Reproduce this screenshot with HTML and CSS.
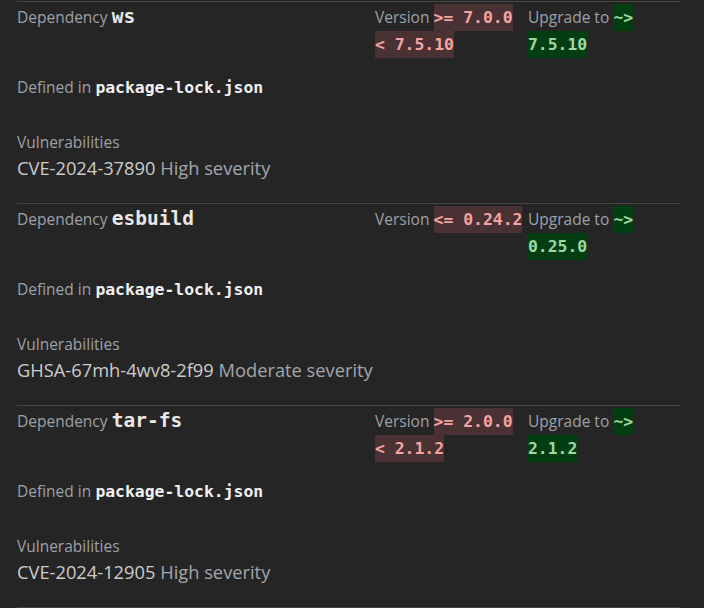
FILE: index.html
```html
<!DOCTYPE html>
<html>
<head>
<meta charset="utf-8">
<link rel="stylesheet" href="styles.css">
</head>
<body>
<div class="list">
  <section class="dep">
    <div class="head">
      <div class="name"><span class="label">Dependency</span> <code class="pkg">ws</code></div>
      <div class="ver"><span class="label">Version</span> <code class="bad">&gt;= 7.0.0 &lt; 7.5.10</code></div>
      <div class="up"><span class="label">Upgrade to</span> <code class="good">~&gt; 7.5.10</code></div>
    </div>
    <p class="defined"><span class="label">Defined in</span> <code class="file">package-lock.json</code></p>
    <div class="vulns">
      <div class="label vlabel">Vulnerabilities</div>
      <div class="vuln"><span class="id">CVE-2024-37890</span> <span class="sev">High severity</span></div>
    </div>
  </section>
  <section class="dep">
    <div class="head">
      <div class="name"><span class="label">Dependency</span> <code class="pkg">esbuild</code></div>
      <div class="ver"><span class="label">Version</span> <code class="bad">&lt;= 0.24.2</code></div>
      <div class="up"><span class="label">Upgrade to</span> <code class="good">~&gt; 0.25.0</code></div>
    </div>
    <p class="defined"><span class="label">Defined in</span> <code class="file">package-lock.json</code></p>
    <div class="vulns">
      <div class="label vlabel">Vulnerabilities</div>
      <div class="vuln"><span class="id">GHSA-67mh-4wv8-2f99</span> <span class="sev">Moderate severity</span></div>
    </div>
  </section>
  <section class="dep">
    <div class="head">
      <div class="name"><span class="label">Dependency</span> <code class="pkg">tar-fs</code></div>
      <div class="ver"><span class="label">Version</span> <code class="bad">&gt;= 2.0.0 &lt; 2.1.2</code></div>
      <div class="up"><span class="label">Upgrade to</span> <code class="good">~&gt; 2.1.2</code></div>
    </div>
    <p class="defined"><span class="label">Defined in</span> <code class="file">package-lock.json</code></p>
    <div class="vulns">
      <div class="label vlabel">Vulnerabilities</div>
      <div class="vuln"><span class="id">CVE-2024-12905</span> <span class="sev">High severity</span></div>
    </div>
  </section>
</div>
</body>
</html>
```

FILE: styles.css
```css
html, body {
  margin: 0;
  padding: 0;
  background: #252526;
}
body {
  font-family: "Open Sans", "Noto Sans", sans-serif;
  color: #cccccc;
  height: 608px;
  overflow: hidden;
}
.list {
  padding: 1px 24px 0 17px;
}
.dep {
  border-top: 1px solid #454545;
  padding-bottom: 22px;
}
.dep:last-child {
  border-bottom: 1px solid #454545;
}
.label {
  color: #9da1a6;
  font-size: 15.5px;
}
code {
  font-family: "DejaVu Sans Mono", "Liberation Mono", monospace;
  font-weight: bold;
}
.head {
  display: grid;
  grid-template-columns: 1fr 153px 152px;
  line-height: 27px;
  height: 54px;
}
.name {
  padding-top: 1px;
}
.ver, .up {
  padding-top: 2px;
}
.pkg {
  font-size: 19.5px;
  color: #e8e8e8;
}
.bad, .good {
  font-size: 16.4px;
  padding: 4px 0;
}
.bad {
  background: #4a3234;
  color: #f4a3a3;
}
.good {
  background: #033e12;
  color: #9fd6a6;
}
.defined {
  margin: 19px 0 0;
  line-height: 24px;
}
.file {
  font-size: 16.4px;
  color: #f0f0f0;
}
.vulns {
  margin-top: 30px;
}
.vlabel {
  line-height: 24px;
}
.vuln {
  font-size: 18.3px;
  line-height: 27px;
}
.id {
  color: #cccccc;
}
.sev {
  color: #a3a6ab;
}
```
